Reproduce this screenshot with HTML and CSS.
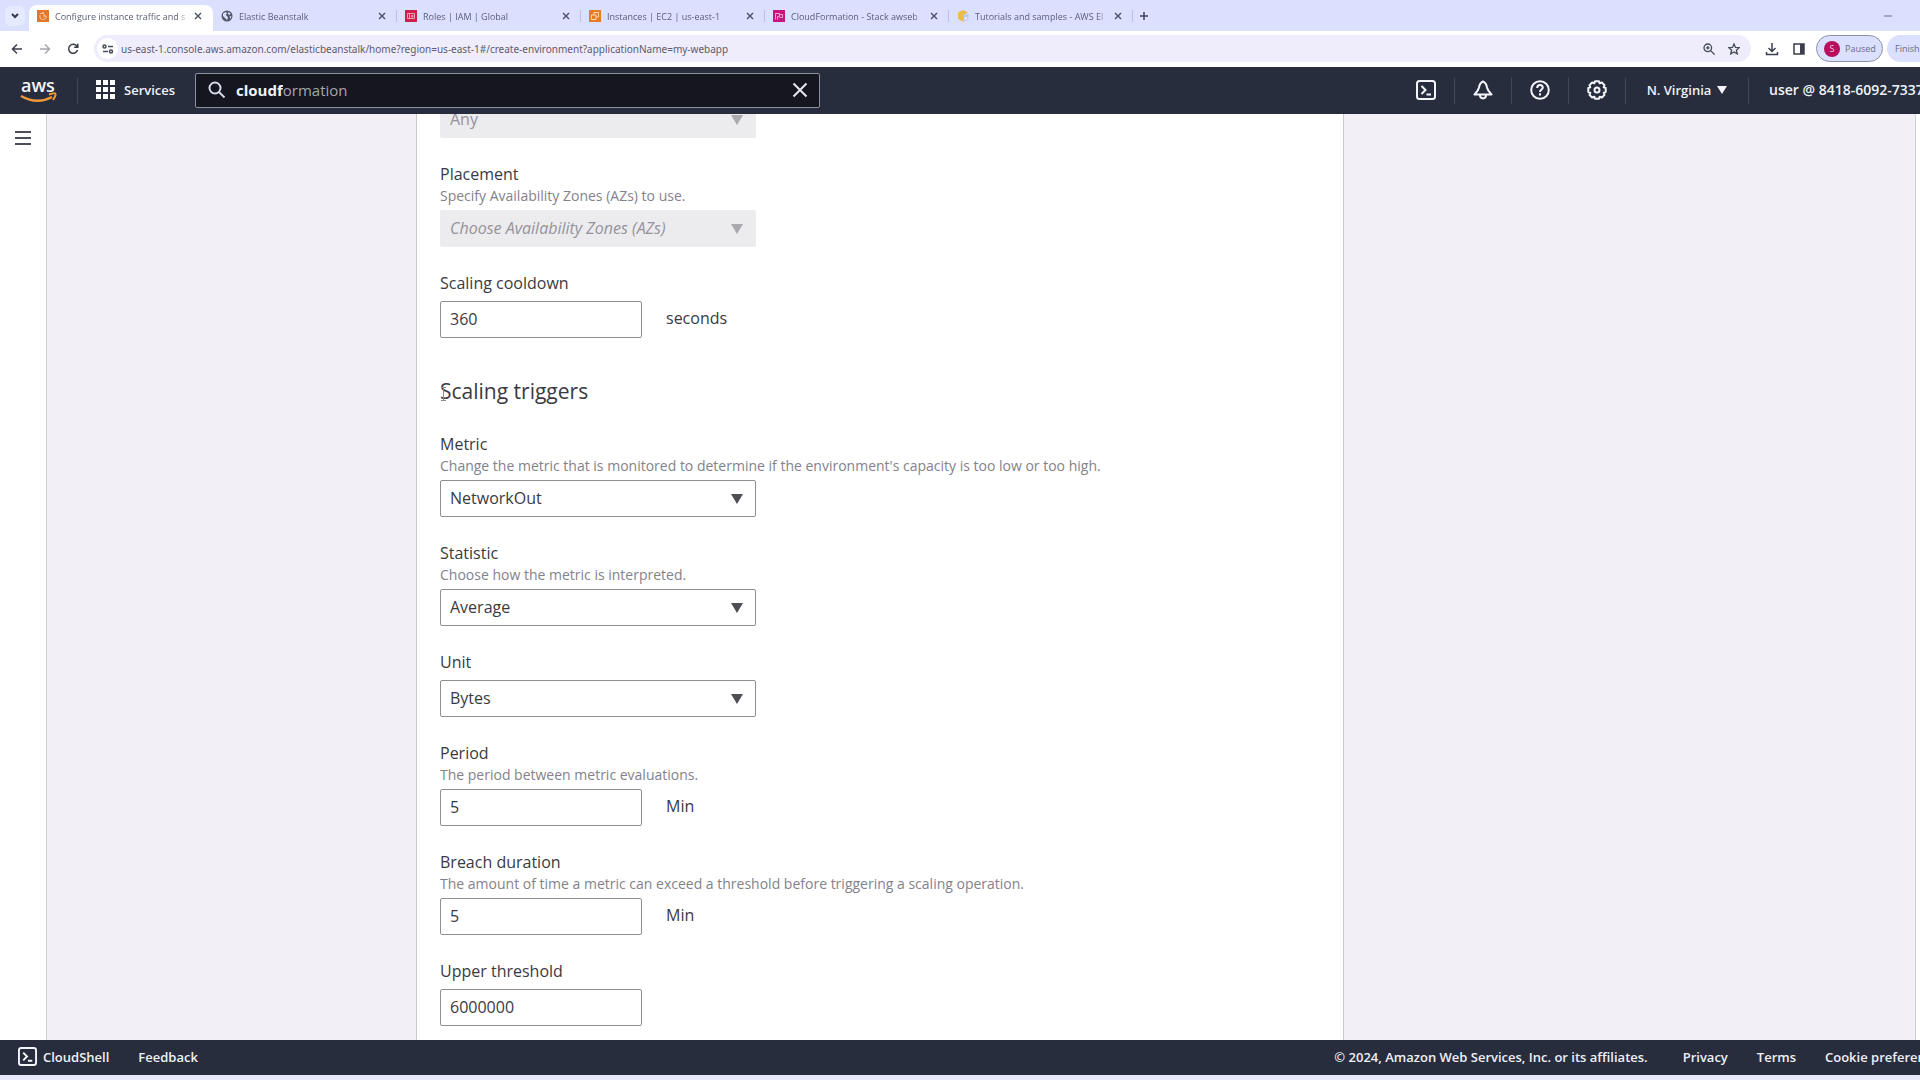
FILE: index.html
```html
<!DOCTYPE html>
<html lang="en">
<head>
  <meta charset="UTF-8">
  <title>Configure instance traffic and scaling</title>
  <meta name="viewport" content="width=device-width, initial-scale=1.0">
  <link rel="stylesheet" href="styles.css">
</head>
<body>

  <!-- Tab strip -->
  <div class="tabstrip">
    <button class="tab-search" aria-label="Search tabs">
      <svg width="8" height="6" viewBox="0 0 8 6"><path d="M1 1l3 3 3-3" fill="none" stroke="#33364a" stroke-width="2"/></svg>
    </button>
    <div class="tab active">
      <svg class="favicon" viewBox="0 0 12 12"><rect width="12" height="12" fill="#e3762b"/><path d="M3 3.500h2.500v-1.500M6.500 2v2l2 1.500M3 5v3l3 2 3-2v-2H6" fill="none" stroke="#fbc99b"/></svg>
      <a href="#" class="tab-title">Configure instance traffic and s</a>
      <button class="tab-close" aria-label="Close tab"><svg viewBox="0 0 8 8"><path d="M1 1l6 6M7 1l-6 6"/></svg></button>
    </div>
    <div class="tab">
      <svg class="favicon" viewBox="0 0 12 12"><circle cx="6" cy="6" r="5.500" fill="#54596d"/><path d="M2 3.500l3-1.500 1 1.500-1.500 1.500 1.500 1 1 2-1 2-2-2-2-2zM7.500 2l2 1.500-.5 1.500-2-1zM8.500 6.500l2-.5-1 3z" fill="#dae0fd"/></svg>
      <a href="#" class="tab-title">Elastic Beanstalk</a>
      <button class="tab-close" aria-label="Close tab"><svg viewBox="0 0 8 8"><path d="M1 1l6 6M7 1l-6 6"/></svg></button>
    </div>
    <div class="tab">
      <svg class="favicon" viewBox="0 0 12 12"><rect width="12" height="12" fill="#cf1f4b"/><path d="M2.500 3.500h7v5h-7zM4.500 3.500v5M6.500 5.500h1.500v1.500h-1.500z" fill="none" stroke="#f3a0b4"/></svg>
      <a href="#" class="tab-title">Roles | IAM | Global</a>
      <button class="tab-close" aria-label="Close tab"><svg viewBox="0 0 8 8"><path d="M1 1l6 6M7 1l-6 6"/></svg></button>
    </div>
    <div class="tab">
      <svg class="favicon" viewBox="0 0 12 12"><rect width="12" height="12" fill="#e47b25"/><path d="M2.500 5h4.500v4.500H2.500zM5 5V2.500h4.500V7H7" fill="none" stroke="#fcd9b2"/></svg>
      <a href="#" class="tab-title">Instances | EC2 | us-east-1</a>
      <button class="tab-close" aria-label="Close tab"><svg viewBox="0 0 8 8"><path d="M1 1l6 6M7 1l-6 6"/></svg></button>
    </div>
    <div class="tab">
      <svg class="favicon" viewBox="0 0 12 12"><rect width="12" height="12" fill="#ca1580"/><path d="M2.500 9.500v-6h4v3h-2M4.500 9.500v-3M6.500 4.500h3v3h-3" fill="none" stroke="#f3a1d0"/></svg>
      <a href="#" class="tab-title">CloudFormation - Stack awseb</a>
      <button class="tab-close" aria-label="Close tab"><svg viewBox="0 0 8 8"><path d="M1 1l6 6M7 1l-6 6"/></svg></button>
    </div>
    <div class="tab">
      <svg class="favicon" viewBox="0 0 12 12"><path d="M6 0l5 2.500-5 3v6L1 9V2.500z" fill="#eebb4a"/><path d="M6 5.500l5.500-1.500v5L6 12z" fill="#a9cdf0"/><path d="M7.500 7.500l2.500-1v2.500l-2.500 1z" fill="#e6eefc"/></svg>
      <a href="#" class="tab-title">Tutorials and samples - AWS El</a>
      <button class="tab-close" aria-label="Close tab"><svg viewBox="0 0 8 8"><path d="M1 1l6 6M7 1l-6 6"/></svg></button>
    </div>
    <button class="new-tab" aria-label="New tab"><svg width="8" height="8" viewBox="0 0 8 8"><path d="M4 0v8M0 4h8" stroke="#3f4359" stroke-width="1.500"/></svg></button>
    <button class="minimize" aria-label="Minimize"><svg width="8" height="2" viewBox="0 0 8 2"><path d="M0 1h8" stroke="#6b7088"/></svg></button>
  </div>

  <!-- Address bar -->
  <div class="toolbar">
    <button class="nav-button" aria-label="Back"><svg width="12" height="12" viewBox="0 0 12 12"><path d="M11 6H2M6 1.500L1.500 6 6 10.500" fill="none" stroke="#3c3f4b" stroke-width="1.500"/></svg></button>
    <button class="nav-button" aria-label="Forward"><svg width="12" height="12" viewBox="0 0 12 12"><path d="M1 6h9M6 1.500L10.500 6 6 10.500" fill="none" stroke="#a6a8b0" stroke-width="1.500"/></svg></button>
    <button class="nav-button" aria-label="Reload"><svg width="12" height="12" viewBox="0 0 12 12"><path d="M10 3.500A4.500 4.500 0 1 0 10.500 7M10.800 .8V4.200H7.200" fill="none" stroke="#3c3f4b" stroke-width="1.500"/></svg></button>
    <div class="address">
      <button class="site-info" aria-label="Site information"><svg width="12" height="10" viewBox="0 0 12 10"><g fill="none" stroke="#474a58" stroke-width="1.500"><circle cx="2.500" cy="2.500" r="1.500"/><path d="M6 2.500h5"/><circle cx="9" cy="7.500" r="1.500"/><path d="M1 7.500h5"/></g></svg></button>
      <input class="url" type="text" aria-label="Address" value="us-east-1.console.aws.amazon.com/elasticbeanstalk/home?region=us-east-1#/create-environment?applicationName=my-webapp">
      <button class="plain" aria-label="Zoom"><svg width="12" height="12" viewBox="0 0 12 12"><g fill="none" stroke="#474a58" stroke-width="1.300"><circle cx="4.800" cy="4.800" r="3.800"/><path d="M7.600 7.600l4 4M4.800 3v3.600M3 4.800h3.600"/></g></svg></button>
      <button class="plain" aria-label="Bookmark"><svg width="12" height="12" viewBox="0 0 12 12"><path d="M6 1l1.500 3.400 3.700.3-2.800 2.500.9 3.700L6 9l-3.300 1.900.9-3.700L.8 4.700l3.700-.3z" fill="none" stroke="#474a58" stroke-width="1.300"/></svg></button>
    </div>
    <button class="plain" aria-label="Downloads"><svg width="14" height="14" viewBox="0 0 14 14"><path d="M7 1v8M3.500 6L7 9.500 10.500 6M1.500 10v2.500h11V10" fill="none" stroke="#3c3f4b" stroke-width="1.500"/></svg></button>
    <button class="plain" aria-label="Side panel"><svg width="12" height="12" viewBox="0 0 12 12"><path d="M1 1h10v10H1z" fill="none" stroke="#3c3f4b" stroke-width="1.500"/><path d="M7 1h4v10H7z" fill="#3c3f4b"/></svg></button>
    <div class="pills">
      <button class="profile"><span class="avatar">S</span>Paused</button>
      <button class="finish">Finish</button>
    </div>
  </div>

  <!-- Console header -->
  <header class="header">
    <a href="#" class="logo" aria-label="AWS home">
      <svg width="38" height="32" viewBox="0 0 38 32">
        <text x="1" y="17" class="logo-text">aws</text>
        <path d="M1 21q16 9 31 1" fill="none" stroke="#f0983a" stroke-width="2.500"/>
        <path d="M29 19.500q6-2 6.500-.5t-2.500 6" fill="none" stroke="#f0983a" stroke-width="2"/>
      </svg>
    </a>
    <button class="services">
      <svg width="20" height="20" viewBox="0 0 20 20" fill="#fff"><path d="M0 0h5v5H0zM7 0h5v5H7zM14 0h5v5h-5zM0 7h5v5H0zM7 7h5v5H7zM14 7h5v5h-5zM0 14h5v5H0zM7 14h5v5H7zM14 14h5v5h-5z"/></svg>
      Services
    </button>
    <div class="search">
      <svg width="18" height="18" viewBox="0 0 18 18"><g fill="none" stroke="#d5d9e2" stroke-width="2"><circle cx="7" cy="7" r="5.500"/><path d="M11 11l5.500 5.500"/></g></svg>
      <div class="search-text">
        <input id="search" type="text" value="cloudf" aria-label="Search services"><span class="ghost">ormation</span>
      </div>
      <button class="plain" aria-label="Clear search"><svg width="16" height="16" viewBox="0 0 16 16"><path d="M1.500 1.500l13 13M14.500 1.500l-13 13" stroke="#e4e7ee" stroke-width="2"/></svg></button>
    </div>
    <nav class="header-tools">
      <button class="tool" aria-label="CloudShell"><svg width="20" height="20" viewBox="0 0 20 20"><g fill="none" stroke="#f3f5fa" stroke-width="2"><rect x="1" y="1" width="18" height="18" rx="2.500"/><path d="M5.500 6l4 4-4 4M10.500 14.500h4.500"/></g></svg></button>
      <button class="tool" aria-label="Notifications"><svg width="20" height="20" viewBox="0 0 20 20"><g fill="none" stroke="#f3f5fa" stroke-width="2"><path d="M10 1.500c-2.500 1-3.500 3-4 6C5.500 10 4 12 1.500 14.500h17C16 12 14.500 10 14 7.500c-.5-3-1.500-5-4-6z" stroke-linejoin="round"/><path d="M7 15c0 4.500 6 4.500 6 0"/></g></svg></button>
      <button class="tool" aria-label="Help"><svg width="20" height="20" viewBox="0 0 20 20"><g fill="none" stroke="#f3f5fa" stroke-width="2"><circle cx="10" cy="10" r="8.800"/><path d="M7.200 8c0-4 5.600-3.800 5.600-.5 0 2-2.800 2-2.800 4.500M10 13.200v2.300"/></g></svg></button>
      <button class="tool" aria-label="Settings"><svg width="20" height="20" viewBox="0 0 20 20"><g fill="none" stroke="#f3f5fa" stroke-width="2" stroke-linejoin="round"><path d="M8 1.300h4l.7 2 2.200-.8 2.600 2.600-.8 2.200 2 .7v4l-2 .7.800 2.200-2.600 2.600-2.200-.8-.7 2H8l-.7-2-2.200.8-2.600-2.600.8-2.200-2-.7V8l2-.7-.8-2.200 2.600-2.600 2.200.8z"/><circle cx="10" cy="10" r="2.500"/></g></svg></button>
      <button class="tool region">N. Virginia <svg width="10" height="8" viewBox="0 0 10 8"><path d="M0 0h10L5 8z" fill="#f3f5fa"/></svg></button>
      <button class="tool account">user @ 8418-6092-7337</button>
    </nav>
  </header>

  <main class="main">
    <aside class="sidebar">
      <button class="plain" aria-label="Open navigation"><svg width="16" height="14" viewBox="0 0 16 14"><path d="M0 1h16M0 7h16M0 13h16" stroke="#4d4f58" stroke-width="2"/></svg></button>
    </aside>

    <div class="content">
      <form class="panel">
        <div class="field">
          <div class="select">
            <select aria-label="Availability Zones" disabled><option>Any</option></select>
            <svg width="12" height="10" viewBox="0 0 12 10"><path d="M0 0h12L6 10z"/></svg>
          </div>
        </div>

        <div class="field">
          <label for="placement">Placement</label>
          <p class="hint">Specify Availability Zones (AZs) to use.</p>
          <div class="select">
            <select id="placement" class="placeholder" disabled><option>Choose Availability Zones (AZs)</option></select>
            <svg width="12" height="10" viewBox="0 0 12 10"><path d="M0 0h12L6 10z"/></svg>
          </div>
        </div>

        <div class="field">
          <label for="cooldown">Scaling cooldown</label>
          <div class="with-unit"><input id="cooldown" type="text" value="360"><span>seconds</span></div>
        </div>

        <h2>Scaling triggers
          <svg class="ibeam" width="7" height="14" viewBox="0 0 7 14"><path d="M1 .5h5M3.500 .5v13M1 13.500h5" fill="none" stroke="#8b8b93"/></svg>
        </h2>

        <div class="field">
          <label for="metric">Metric</label>
          <p class="hint">Change the metric that is monitored to determine if the environment's capacity is too low or too high.</p>
          <div class="select">
            <select id="metric"><option>NetworkOut</option></select>
            <svg width="12" height="10" viewBox="0 0 12 10"><path d="M0 0h12L6 10z"/></svg>
          </div>
        </div>

        <div class="field">
          <label for="statistic">Statistic</label>
          <p class="hint">Choose how the metric is interpreted.</p>
          <div class="select">
            <select id="statistic"><option>Average</option></select>
            <svg width="12" height="10" viewBox="0 0 12 10"><path d="M0 0h12L6 10z"/></svg>
          </div>
        </div>

        <div class="field">
          <label for="unit">Unit</label>
          <div class="select">
            <select id="unit"><option>Bytes</option></select>
            <svg width="12" height="10" viewBox="0 0 12 10"><path d="M0 0h12L6 10z"/></svg>
          </div>
        </div>

        <div class="field">
          <label for="period">Period</label>
          <p class="hint">The period between metric evaluations.</p>
          <div class="with-unit"><input id="period" type="text" value="5"><span>Min</span></div>
        </div>

        <div class="field">
          <label for="breach">Breach duration</label>
          <p class="hint">The amount of time a metric can exceed a threshold before triggering a scaling operation.</p>
          <div class="with-unit"><input id="breach" type="text" value="5"><span>Min</span></div>
        </div>

        <div class="field">
          <label for="upper">Upper threshold</label>
          <div class="with-unit"><input id="upper" type="text" value="6000000"></div>
        </div>
      </form>
    </div>
  </main>

  <footer class="footer">
    <a href="#" class="shell"><svg width="19" height="19" viewBox="0 0 20 20"><g fill="none" stroke="#f3f5fa" stroke-width="2"><rect x="1" y="1" width="18" height="18" rx="2.500"/><path d="M5.500 6l4 4-4 4M10.500 14.500h4.500"/></g></svg>CloudShell</a>
    <a href="#">Feedback</a>
    <span class="copyright">© 2024, Amazon Web Services, Inc. or its affiliates.</span>
    <a href="#">Privacy</a>
    <a href="#">Terms</a>
    <a href="#" class="cookies">Cookie preferences</a>
  </footer>
  <div class="taskbar"></div>

</body>
</html>
```
FILE: styles.css
```css
* {
  box-sizing: border-box;
}

body {
  margin: 0;
  height: 100vh;
  display: flex;
  flex-direction: column;
  overflow: hidden;
  background: #fff;
  font-family: "Open Sans", "Noto Sans", sans-serif;
  font-size: 16px;
  color: #3a3a42;
}

button, input, select {
  font: inherit;
  color: inherit;
}

button {
  border: 0;
  padding: 0;
  background: none;
  cursor: pointer;
}

a {
  color: inherit;
  text-decoration: none;
}

svg {
  display: block;
  flex: none;
}

.plain {
  flex: none;
}

/* tab strip */
.tabstrip {
  flex: none;
  height: 31px;
  display: flex;
  align-items: flex-end;
  background: #dae0fd;
  font-size: 9px;
  color: #5c6078;
}

.tab-search {
  width: 20px;
  height: 20px;
  margin: 0 4px 5px 5px;
  display: flex;
  align-items: center;
  justify-content: center;
  border-radius: 6px;
  background: #e6eafe;
}

.tab {
  width: 184px;
  height: 26px;
  padding: 0 11px 4px 8px;
  display: flex;
  align-items: center;
  gap: 6px;
}

.tab.active {
  background: #fff;
  border-radius: 8px 8px 0 0;
}

.tab:not(.active) {
  background: linear-gradient(#b9bfdc, #b9bfdc) right 5px / 1px 12px no-repeat;
}

.favicon {
  width: 12px;
  height: 12px;
}

.tab-title {
  flex: 1;
  overflow: hidden;
  white-space: nowrap;
  mask-image: linear-gradient(to right, #000 122px, transparent 134px);
}

.tab-close {
  width: 8px;
}

.tab-close svg {
  width: 8px;
  height: 8px;
  stroke: #4a4e63;
  stroke-width: 1.4;
}

.new-tab {
  margin: 0 0 11px 7px;
}

.minimize {
  margin: 0 28px 14px auto;
}

/* address bar */
.toolbar {
  flex: none;
  height: 36px;
  padding: 4px 0 5px 3px;
  display: flex;
  align-items: center;
  background: #fff;
}

.nav-button {
  width: 28px;
  height: 27px;
  display: flex;
  align-items: center;
  justify-content: center;
}

.address {
  flex: 1;
  height: 27px;
  margin: 0 14px 0 7px;
  padding: 0 11px 0 3px;
  display: flex;
  align-items: center;
  gap: 13px;
  border-radius: 14px;
  background: #efecfb;
}

.site-info {
  width: 21px;
  height: 21px;
  margin-right: -10px;
  display: flex;
  align-items: center;
  justify-content: center;
  border-radius: 50%;
  background: #fff;
}

.url {
  flex: 1;
  padding: 0;
  border: 0;
  background: none;
  font-family: "Noto Sans", sans-serif;
  font-size: 10px;
  color: #5d5b6c;
}

.toolbar > .plain {
  margin-right: 14px;
}

.pills {
  flex: none;
  width: 104px;
  margin-left: -3px;
  display: flex;
  gap: 4px;
  overflow: hidden;
  font-size: 9px;
  color: #676c88;
}

.profile, .finish {
  flex: none;
  height: 27px;
  display: flex;
  align-items: center;
  border-radius: 14px;
  background: #dae0fd;
}

.profile {
  width: 67px;
  gap: 5px;
  padding-left: 7px;
  border: 1px solid #8d90a8;
}

.avatar {
  width: 16px;
  height: 16px;
  line-height: 16px;
  border-radius: 50%;
  background: #b90d5f;
  color: #f3c3da;
  text-align: center;
}

.finish {
  width: 60px;
  padding-left: 8px;
}

/* console header */
.header {
  flex: none;
  height: 47px;
  display: flex;
  align-items: center;
  background: #272d3d;
  font-size: 13px;
  font-weight: 600;
  color: #f0f2f8;
}

.logo {
  width: 78px;
  height: 26px;
  padding-left: 20px;
  display: flex;
  align-items: center;
  border-right: 1px solid #434957;
}

.logo-text {
  font-size: 18px;
  font-weight: 600;
  fill: #f3f5fa;
}

.services {
  width: 117px;
  padding: 0 0 2px 18px;
  display: flex;
  align-items: center;
  gap: 8px;
}

.search {
  width: 33%;
  max-width: 625px;
  height: 35px;
  padding: 0 11px 2px 12px;
  display: flex;
  align-items: center;
  gap: 10px;
  border: 1px solid #8b919e;
  border-radius: 2px;
  background: #151620;
  font-size: 15px;
}

.search-text {
  flex: 1;
  display: flex;
  align-items: baseline;
}

.search-text input {
  field-sizing: content;
  padding: 0;
  border: 0;
  outline: 0;
  background: none;
  font-weight: 700;
}

.ghost {
  font-weight: 400;
  color: #a3a7b0;
}

.header-tools {
  margin-left: auto;
  display: flex;
}

.tool {
  width: 57px;
  height: 26px;
  padding-bottom: 2px;
  display: flex;
  align-items: center;
  justify-content: center;
  border-right: 1px solid #434957;
}

.region {
  width: 123px;
  gap: 6px;
}

.account {
  width: 171px;
  padding-left: 20px;
  justify-content: flex-start;
  overflow: hidden;
  white-space: nowrap;
  border: 0;
  font-size: 14px;
}

/* page */
.main {
  flex: 1;
  min-height: 0;
  display: flex;
  overflow: hidden;
  background: #fff;
}

.sidebar {
  flex: none;
  width: 47px;
  padding: 14px 15px;
  border-right: 1px solid #d0ced6;
}

.content {
  flex: 1;
  margin-right: 4px;
  display: grid;
  grid-template-columns: 369fr 928fr 571fr;
  border-right: 1px solid #d0ced6;
  background: #f2f0f6;
}

.panel {
  grid-column: 2;
  margin-top: -13px;
  padding: 0 23px;
  display: flex;
  flex-direction: column;
  gap: 24px;
  border: 1px solid #c9c7cf;
  border-width: 0 1px;
  background: #fff;
}

label {
  display: block;
  margin-bottom: 6px;
  line-height: 24px;
}

.hint {
  margin: -6px 0 4px;
  font-size: 14px;
  line-height: 20px;
  color: #83828b;
}

.select {
  width: 316px;
  display: grid;
  align-items: center;
}

.select > * {
  grid-area: 1 / 1;
}

.select svg {
  justify-self: end;
  margin-right: 13px;
  fill: #4e4e55;
  pointer-events: none;
}

select, .with-unit input {
  height: 37px;
  padding: 0 9px 1px;
  border: 1px solid #8f8f96;
  border-radius: 2px;
  background: #fff;
}

select {
  appearance: none;
  width: 100%;
}

select:disabled {
  border-color: #ecebed;
  background: #ecebed;
  color: #94939b;
  opacity: 1;
}

select:disabled + svg {
  fill: #aaa9af;
}

.placeholder {
  font-style: italic;
}

.with-unit {
  display: flex;
  align-items: center;
  gap: 24px;
}

.with-unit input {
  width: 202px;
}

.with-unit span {
  padding-bottom: 4px;
}

h2 {
  position: relative;
  margin: 14px 0 2px;
  font-size: 21px;
  font-weight: 400;
  line-height: 30px;
}

.ibeam {
  position: absolute;
  left: 0;
  top: 11px;
}

/* footer */
.footer {
  flex: none;
  height: 35px;
  padding: 0 0 2px 18px;
  display: flex;
  align-items: center;
  gap: 29px;
  background: #272d3d;
  font-size: 13px;
  font-weight: 600;
  color: #eef0f7;
}

.shell {
  display: flex;
  align-items: center;
  gap: 6px;
}

.copyright {
  margin: 0 6px 0 auto;
}

.cookies {
  width: 95px;
  overflow: hidden;
  white-space: nowrap;
}

.taskbar {
  flex: none;
  height: 5px;
  background: #e8e9fb;
}
```
